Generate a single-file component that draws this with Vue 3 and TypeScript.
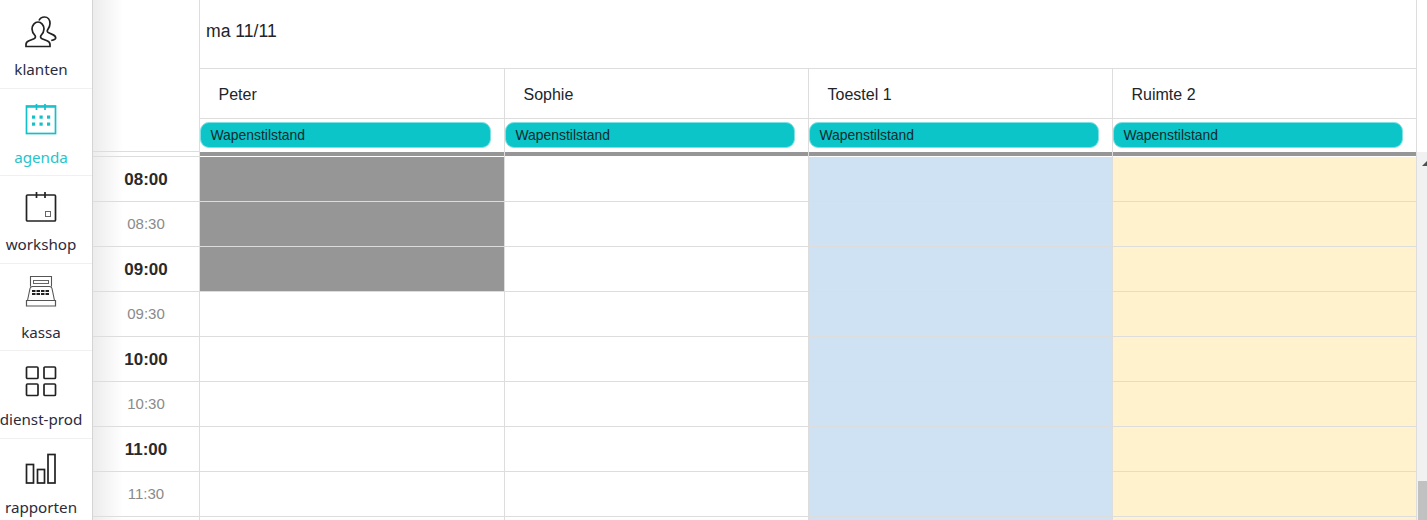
<script setup lang="ts">
const navItems = [
  { key: 'klanten', active: false },
  { key: 'agenda', active: true },
  { key: 'workshop', active: false },
  { key: 'kassa', active: false },
  { key: 'dienst-prod', active: false },
  { key: 'rapporten', active: false },
]
const columns = [
  { name: 'Peter', tone: 'plain', busy: 3 },
  { name: 'Sophie', tone: 'plain', busy: 0 },
  { name: 'Toestel 1', tone: 'blue', busy: 0 },
  { name: 'Ruimte 2', tone: 'cream', busy: 0 },
]
const times = ['08:00', '08:30', '09:00', '09:30', '10:00', '10:30', '11:00', '11:30', '']
</script>

<template>
  <div class="page">
    <nav class="nav">
      <div v-for="item in navItems" :key="item.key" class="nav-item" :class="{ active: item.active }">
        <svg class="nav-icon" viewBox="0 0 32 32" width="32" height="32" fill="none" stroke="currentColor" stroke-width="1.7">
          <template v-if="item.key === 'klanten'">
            <path d="M1 30.500v-2c0-2 1-3 3-3.800l5-2c1.500-.6 1.800-2 1-3.200-1.800-2-3-4-3-6.500 0-3.800 2.800-7 6-7s6 3.200 6 7c0 2.500-1.200 4.500-3 6.500-.8 1.200-.5 2.600 1 3.200l5 2c2 .8 3 1.800 3 3.800v2Z" />
            <path d="M14 4.500c1-2.300 3-3.500 5.500-3.500 3.300 0 5.500 2.800 5.500 6.500 0 2.500-1 4.500-2.300 6.300-.8 1.200-.5 2.400 1 3l4 1.800c2 .9 3 2 3 3.400 0 1.200-1.500 1.800-4.500 2.500" />
          </template>
          <template v-else-if="item.key === 'agenda'">
            <rect x="1.500" y="2" width="29" height="27.500" />
            <path d="M1.500 3h29M11.500 0v6M20 0v6" />
            <g fill="currentColor" stroke="none">
              <rect x="7" y="11.500" width="3.200" height="3.200" /><rect x="14.500" y="11.500" width="3.200" height="3.200" /><rect x="22" y="11.500" width="3.200" height="3.200" />
              <rect x="7" y="18.500" width="3.200" height="3.200" /><rect x="14.500" y="18.500" width="3.200" height="3.200" /><rect x="22" y="18.500" width="3.200" height="3.200" />
            </g>
          </template>
          <template v-else-if="item.key === 'workshop'">
            <rect x="1.500" y="4" width="29" height="26" rx="1" />
            <path d="M11.500 1v6M20 1v6" />
            <rect x="20.500" y="20.500" width="5" height="5" stroke-width="1" stroke="#666" />
          </template>
          <template v-else-if="item.key === 'kassa'">
            <path d="M1.500 21.500h29v5.500h-29Z" stroke-width="1.200" stroke="#555" />
            <path d="M2.500 21.500 5 9.500c.3-1.300 1-2 2.500-2h17c1.500 0 2.200.7 2.500 2l2.500 12" stroke-width="1.100" stroke="#555" />
            <path d="M5.500 7.500v-10h21v10" stroke-width="1.100" stroke="#555" />
            <rect x="8.500" y="1.500" width="15" height="3" stroke-width="1" stroke="#666" />
            <path d="M7 12h18M7 15h18" stroke-width="2" stroke-dasharray="3.500 1" stroke="#222" />
          </template>
          <template v-else-if="item.key === 'dienst-prod'">
            <rect x="1.500" y="1" width="11.500" height="11.500" rx="1" />
            <rect x="19" y="1" width="11.500" height="11.500" rx="1" />
            <rect x="1.500" y="18" width="11.500" height="11.500" rx="1" />
            <rect x="19" y="18" width="11.500" height="11.500" rx="1" />
          </template>
          <template v-else>
            <rect x="1.500" y="10.500" width="7" height="18.500" />
            <rect x="12.500" y="15.500" width="7" height="13.500" />
            <rect x="23" y="0.500" width="7" height="28.500" />
          </template>
        </svg>
        <span class="nav-label">{{ item.key }}</span>
      </div>
    </nav>

    <main class="main">
      <header class="head">
        <div class="head-gutter"></div>
        <div class="head-body">
          <div class="date">ma 11/11</div>
          <div class="names">
            <div v-for="col in columns" :key="col.name" class="name">{{ col.name }}</div>
          </div>
          <div class="allday">
            <div v-for="col in columns" :key="col.name" class="allday-cell">
              <span class="event">Wapenstilstand</span>
            </div>
          </div>
        </div>
      </header>

      <section class="body">
        <div class="times">
          <div class="time-band"></div>
          <div v-for="(t, i) in times" :key="i" class="time" :class="{ hour: i % 2 === 0 }">{{ t }}</div>
        </div>
        <div v-for="col in columns" :key="col.name" class="col" :class="col.tone">
          <div class="col-band"></div>
          <div v-for="(t, i) in times" :key="i" class="slot" :class="{ busy: i < col.busy }"></div>
        </div>
        <div class="scrollbar">
          <span class="arrow"></span>
          <span class="thumb"></span>
        </div>
      </section>
    </main>
  </div>
</template>

<style>
html, body { margin: 0; background: #fff; overflow: hidden; }
</style>

<style scoped>
.page {
  display: flex;
  width: 1427px;
  height: 520px;
  overflow: hidden;
  font-family: "Liberation Sans", Arial, sans-serif;
  color: #212529;
}
.nav {
  flex: 0 0 92px;
  min-width: 0;
  padding-top: 1px;
  border-right: 1px solid #d4d4d4;
  box-sizing: content-box;
  background: #fff;
}
.nav-item {
  box-sizing: border-box;
  width: 92px;
  height: 87.6px;
  padding: 15px 10px 0 0;
  display: flex;
  flex-direction: column;
  align-items: center;
  border-bottom: 1px solid #f0f0f0;
  color: #222;
  white-space: nowrap;
}
.nav-item.active { color: #15c1c8; }
.nav-icon { display: block; flex: none; overflow: visible; }
.nav-label {
  margin-top: 11px;
  font-family: "Noto Sans", sans-serif;
  font-size: 15.2px;
  line-height: 20px;
  color: #2b2b3d;
}
.active .nav-label { color: #27c4cb; }
.main {
  flex: 1;
  min-width: 0;
  display: flex;
  flex-direction: column;
  background: linear-gradient(to right, #ececec, #fff 30px) no-repeat 0 0 / 107px 100%;
}
.head {
  display: flex;
  height: 152px;
  flex: none;
}
.head-gutter {
  flex: 0 0 107px;
  box-sizing: border-box;
  border-right: 1px solid #ddd;
  border-bottom: 1px solid #ddd;
}
.head-body {
  flex: 0 0 1217px;
  box-sizing: border-box;
  border-right: 1px solid #ddd;
  display: flex;
  flex-direction: column;
}
.date {
  height: 68px;
  flex: none;
  box-sizing: content-box;
  border-bottom: 1px solid #ddd;
  padding-left: 6px;
  font-size: 17.6px;
  line-height: 63px;
}
.names, .allday { display: grid; grid-template-columns: 305px 304px 304px 303px; }
.name {
  height: 49px;
  border-bottom: 1px solid #ddd;
  border-right: 1px solid #ddd;
  padding-left: 18.5px;
  font-size: 16px;
  line-height: 52px;
}
.name:last-child, .allday-cell:last-child { border-right: 0; }
.allday-cell {
  box-sizing: border-box;
  height: 33px;
  border-right: 1px solid #ddd;
  padding: 3px 13px 0 0;
}
.event {
  display: block;
  box-sizing: border-box;
  height: 26px;
  border: 1px solid #7fdfe2;
  border-radius: 9px;
  background: #0cc5c8;
  padding-left: 9.500px;
  font-size: 13.9px;
  line-height: 24px;
  color: #102a2e;
}
.body {
  flex: 1;
  min-height: 0;
  display: flex;
  overflow: hidden;
}
.times { flex: 0 0 107px; }
.time-band {
  box-sizing: border-box;
  height: 5px;
  border-bottom: 1px solid #ddd;
  border-right: 1px solid #ddd;
}
.time {
  box-sizing: border-box;
  height: 45px;
  border-right: 1px solid #ddd;
  border-bottom: 1px solid #ddd;
  text-align: center;
  font-size: 15px;
  line-height: 44px;
  color: #8a8a8a;
}
.time.hour { font-size: 17px; line-height: 45px; font-weight: 700; color: #2a2a2a; }
.col { flex: 0 0 305px; box-sizing: border-box; border-right: 1px solid #ddd; }
.col:nth-of-type(n+3) { flex-basis: 304px; }
.col-band { height: 4px; background: #969696; border-bottom: 1px solid #fff; }
.slot { box-sizing: border-box; height: 45px; border-bottom: 1px solid #ddd; }
.slot.busy { background: #969696; border-bottom-color: #dcdcdc; }
.blue .slot { background: #cfe2f3; }
.cream .slot { background: #fff2cc; }
.scrollbar {
  flex: 1;
  display: flex;
  flex-direction: column;
  align-items: flex-end;
  justify-content: space-between;
  background: #f1f1f1;
}
.arrow {
  margin-top: 9px;
  width: 0;
  height: 0;
  border-left: 5px solid transparent;
  border-bottom: 5px solid #505050;
}
.thumb { width: 9px; height: 39px; background: #c1c1c1; }
</style>
